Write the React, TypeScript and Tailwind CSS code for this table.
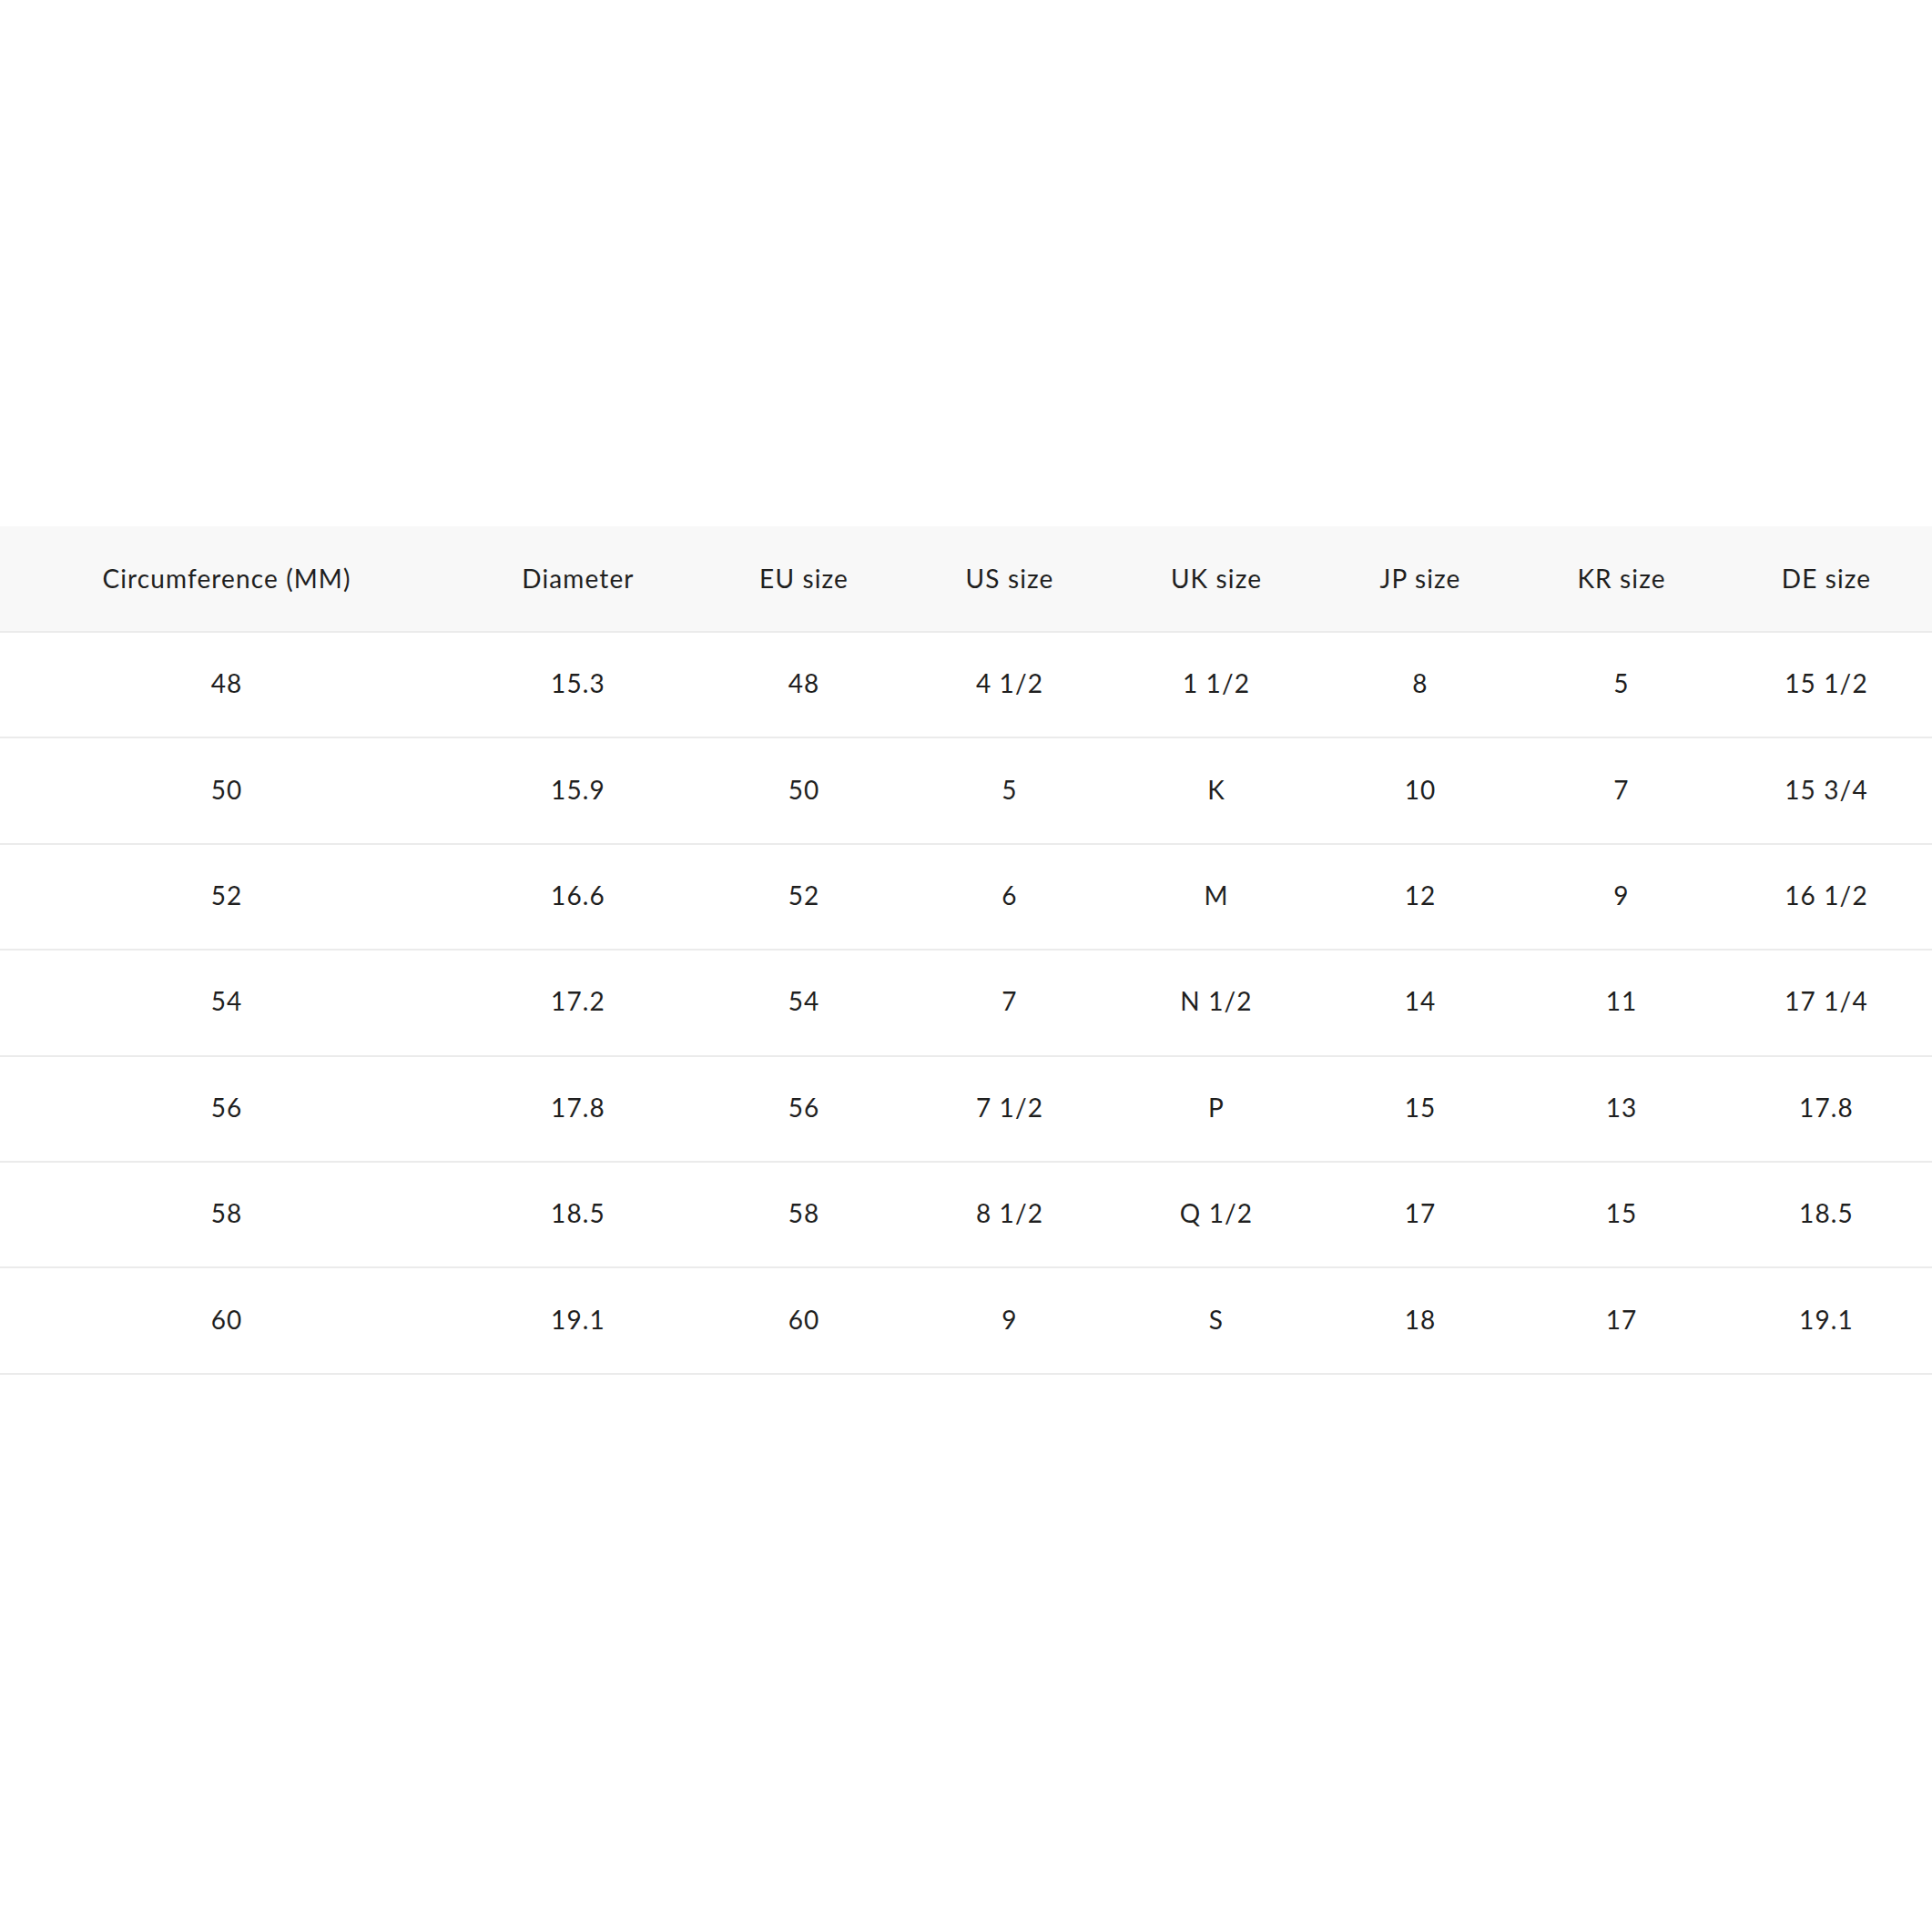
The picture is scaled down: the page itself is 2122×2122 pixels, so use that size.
const headers = ['Circumference (MM)', 'Diameter', 'EU size', 'US size', 'UK size', 'JP size', 'KR size', 'DE size'];

const rows = [
  ['48', '15.3', '48', '4 1/2', '1 1/2', '8', '5', '15 1/2'],
  ['50', '15.9', '50', '5', 'K', '10', '7', '15 3/4'],
  ['52', '16.6', '52', '6', 'M', '12', '9', '16 1/2'],
  ['54', '17.2', '54', '7', 'N 1/2', '14', '11', '17 1/4'],
  ['56', '17.8', '56', '7 1/2', 'P', '15', '13', '17.8'],
  ['58', '18.5', '58', '8 1/2', 'Q 1/2', '17', '15', '18.5'],
  ['60', '19.1', '60', '9', 'S', '18', '17', '19.1'],
];

const colWidths = ['w-[498px]', 'w-[274px]', 'w-[222px]', 'w-[230px]', 'w-[224px]', 'w-[224px]', 'w-[218px]', 'w-[232px]'];

const App = () => {
  return (
    <div className="min-h-[2122px] bg-white pt-[578px] font-['Lato','Noto_Sans',sans-serif] text-[#1f1f1f]">
      {/* Size chart */}
      <table className="w-full table-fixed border-collapse text-center text-[28px] tracking-[0.04em]">
        <colgroup>
          {colWidths.map((w, i) => (
            <col key={i} className={w} />
          ))}
        </colgroup>
        <thead>
          <tr className="border-b-2 border-[#ebebeb] bg-[#f8f8f8]">
            {headers.map((h) => (
              <th key={h} className="h-[116px] p-0 pb-[2px] font-normal">
                {h}
              </th>
            ))}
          </tr>
        </thead>
        <tbody>
          {rows.map((row, i) => (
            <tr key={i} className="border-b-2 border-[#ebebeb]">
              {row.map((cell, j) => (
                <td key={j} className="h-[116.4px] p-0 pb-[4px]">
                  {cell}
                </td>
              ))}
            </tr>
          ))}
        </tbody>
      </table>
    </div>
  );
};

export default App;
